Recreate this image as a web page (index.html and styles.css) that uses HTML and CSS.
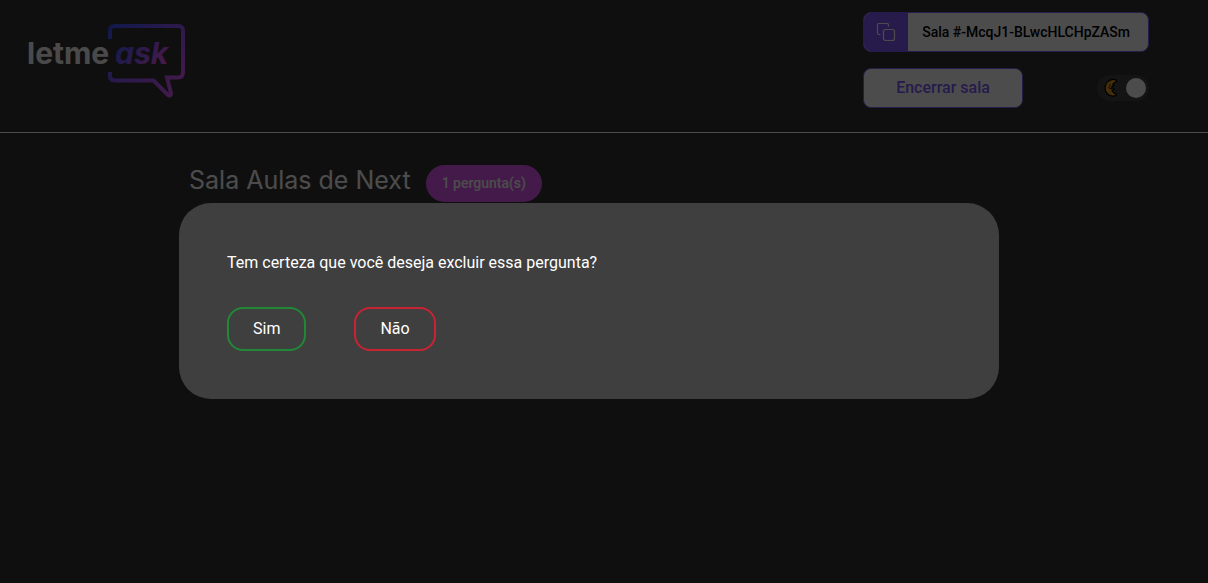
FILE: index.html
```html
<!DOCTYPE html>
<html lang="pt-BR">
<head>
<meta charset="utf-8">
<meta name="viewport" content="width=device-width, initial-scale=1">
<title>Letmeask</title>
<link rel="stylesheet" href="styles.css">
</head>
<body>
<header class="header">
  <a class="logo" href="#" aria-label="Letmeask">
    <svg width="160" height="76" viewBox="27 23 160 76" fill="none">
      <defs>
        <linearGradient id="bubble" gradientUnits="userSpaceOnUse" x1="112" y1="26" x2="180" y2="92">
          <stop offset="0" stop-color="#4155ff"/>
          <stop offset="1" stop-color="#e559f9"/>
        </linearGradient>
        <linearGradient id="ask" gradientUnits="userSpaceOnUse" x1="122" y1="38" x2="158" y2="68">
          <stop offset="0" stop-color="#485bff"/>
          <stop offset="1" stop-color="#e559f9"/>
        </linearGradient>
      </defs>
      <path d="M110 39V31Q110 26 115 26H178Q183 26 183 31V72Q183 77.500 178 77.500H167L171 93Q171 97 167.500 94.500L153.500 80.500H115Q110 80.500 110 75.500V72" stroke="url(#bubble)" stroke-width="4"/>
      <text class="logo-text" x="27" y="64">letme</text>
      <text class="logo-text logo-ask" x="115" y="64">ask</text>
    </svg>
  </a>
  <div class="actions">
    <button class="room-code" type="button">
      <span class="copy-icon">
        <svg width="20" height="20" viewBox="0 0 20 20" fill="none" stroke="#fff" stroke-width="1.200" stroke-linejoin="round" stroke-linecap="round">
          <rect x="7.500" y="7.500" width="11" height="11" rx="2"/>
          <path d="M4 12.500H3Q1.500 12.500 1.500 11V3Q1.500 1.500 3 1.500H11Q12.500 1.500 12.500 3V4"/>
        </svg>
      </span>
      <span class="code-text">Sala #-McqJ1-BLwcHLCHpZASm</span>
    </button>
    <div class="action-row">
      <button class="end-room" type="button">Encerrar sala</button>
      <label class="toggle">
        <input class="toggle-input" type="checkbox" aria-label="Tema escuro" checked>
        <svg class="moon" width="16" height="20" viewBox="0 0 16 20">
          <path d="M13.500 2.500C11 .8 7 1.200 4.500 3.800C1.200 7.200 1.200 12.800 4.500 16C7 18.500 11 18.800 13.500 17V16C11 15.500 9.500 14 9 12.200L10.500 11.800L11 10.500L9 10V8.500L11 7.500L9.800 6.500C10.500 5 12 4 13.500 3.800Z" fill="#e09a1c" stroke="#000" stroke-width="1.200" stroke-linejoin="round"/>
          <path d="M7 6.500V8.500M5.500 9.500Q7 11 9 10.200" stroke="#000" stroke-width="1" fill="none"/>
        </svg>
        <span class="knob"></span>
      </label>
    </div>
  </div>
</header>
<main class="room">
  <div class="room-title">
    <h1 class="room-name">Sala Aulas de Next</h1>
    <span class="count">1 pergunta(s)</span>
  </div>
</main>
<div class="overlay">
  <section class="modal" role="dialog" aria-modal="true" aria-labelledby="question">
    <p class="modal-text" id="question">Tem certeza que você deseja excluir essa pergunta?</p>
    <div class="modal-buttons">
      <button class="choice choice-yes" type="button">Sim</button>
      <button class="choice choice-no" type="button">Não</button>
    </div>
  </section>
</div>
</body>
</html>
```
FILE: styles.css
```css
* {
  margin: 0;
  padding: 0;
  box-sizing: border-box;
}

body {
  background: #333;
  color: #fff;
  font: 400 16px/24px Roboto, sans-serif;
}

button {
  font: 400 16px/24px Roboto, sans-serif;
  cursor: pointer;
}

.header {
  display: flex;
  justify-content: space-between;
  align-items: flex-start;
  padding: 12px 59px 24px 27px;
  border-bottom: 1px solid #fff;
}

.logo {
  display: flex;
  padding-top: 11px;
}

.logo-text {
  font: 700 30px Inter, sans-serif;
  fill: #f8f8f8;
}

.logo-ask {
  font-style: italic;
  fill: url(#ask);
}

.actions {
  display: flex;
  flex-direction: column;
  gap: 16px;
}

.room-code {
  display: flex;
  height: 40px;
  border: 1px solid #835afd;
  border-radius: 8px;
  overflow: hidden;
  background: #fff;
  color: #000;
  font-size: 14px;
  font-weight: 500;
}

.copy-icon {
  display: flex;
  align-items: center;
  align-self: stretch;
  padding: 0 12px;
  background: #835afd;
}

.code-text {
  align-self: center;
  padding: 0 18px 0 14px;
}

.action-row {
  display: flex;
  justify-content: space-between;
  align-items: center;
}

.end-room {
  height: 40px;
  padding: 0 32px;
  border: 1px solid #835afd;
  border-radius: 8px;
  background: #fff;
  color: #835afd;
  font-weight: 500;
}

.toggle {
  display: flex;
  justify-content: space-between;
  align-items: center;
  width: 52px;
  height: 26px;
  padding: 0 3px 0 6px;
  border-radius: 13px;
  background: #444;
}

.toggle-input {
  position: absolute;
  opacity: 0;
}

.knob {
  width: 20px;
  height: 20px;
  border-radius: 50%;
  background: #fff;
}

.room {
  display: flex;
  justify-content: center;
  padding: 32px 30px 0 0;
}

.room-title {
  display: flex;
  align-items: flex-start;
  gap: 15px;
  width: 100%;
  max-width: 800px;
}

.room-name {
  font: 400 25px/30px Inter, sans-serif;
}

.count {
  padding: 8px 16px;
  border-radius: 20px;
  background: #e559f9;
  font-size: 14px;
  font-weight: 500;
  line-height: 21px;
}

.overlay {
  position: fixed;
  inset: 0;
  display: flex;
  justify-content: center;
  align-items: center;
  padding: 19px 30px 0 0;
  background: rgba(0, 0, 0, 0.7);
}

.modal {
  display: flex;
  flex-direction: column;
  gap: 32px;
  width: 100%;
  max-width: 820px;
  padding: 48px;
  border-radius: 32px;
  background: #3f3f3f;
}

.modal-buttons {
  display: flex;
  gap: 48px;
}

.choice {
  padding: 8px 24px;
  border: 2px solid;
  border-radius: 16px;
  background: transparent;
  color: #fff;
}

.choice-yes {
  border-color: #218838;
}

.choice-no {
  border-color: #c82333;
}
```
